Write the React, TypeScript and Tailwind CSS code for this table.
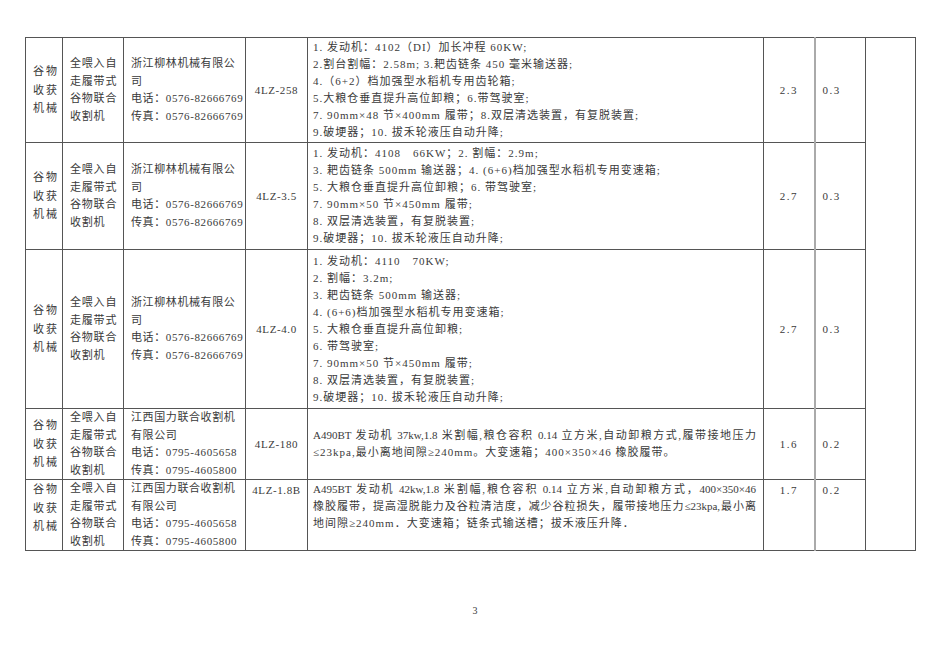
import React from "react";

type Row = {
  maker: string[];
  model: string;
  desc: string[];
  justify?: number;
  a: string;
  b: string;
  h: string;
  top?: boolean;
};

const kind = ["全喂入自", "走履带式", "谷物联合", "收割机"];
const liulin = ["浙江柳林机械有限公", "司", "电话：0576-82666769", "传真：0576-82666769"];
const guoli = ["江西国力联合收割机", "有限公司", "电话：0795-4605658", "传真：0795-4605800"];

const rows: Row[] = [
  {
    maker: liulin,
    model: "4LZ-258",
    desc: [
      "1. 发动机：4102（DI）加长冲程 60KW;",
      "2.割台割幅：2.58m; 3.耙齿链条 450 毫米输送器;",
      "4.（6+2）档加强型水稻机专用齿轮箱;",
      "5.大粮仓垂直提升高位卸粮；6.带驾驶室;",
      "7. 90mm×48 节×400mm 履带；8.双层清选装置，有复脱装置;",
      "9.破埂器；10. 拔禾轮液压自动升降;",
    ],
    a: "2.3",
    b: "0.3",
    h: "h-[105px]",
  },
  {
    maker: liulin,
    model: "4LZ-3.5",
    desc: [
      "1. 发动机：4108　66KW；2. 割幅：2.9m;",
      "3. 耙齿链条 500mm 输送器；4. (6+6)档加强型水稻机专用变速箱;",
      "5. 大粮仓垂直提升高位卸粮；6. 带驾驶室;",
      "7. 90mm×50 节×450mm 履带;",
      "8. 双层清选装置，有复脱装置;",
      "9.破埂器；10. 拔禾轮液压自动升降;",
    ],
    a: "2.7",
    b: "0.3",
    h: "h-[107px]",
  },
  {
    maker: liulin,
    model: "4LZ-4.0",
    desc: [
      "1. 发动机：4110　70KW;",
      "2. 割幅：3.2m;",
      "3. 耙齿链条 500mm 输送器;",
      "4. (6+6)档加强型水稻机专用变速箱;",
      "5. 大粮仓垂直提升高位卸粮;",
      "6. 带驾驶室;",
      "7. 90mm×50 节×450mm 履带;",
      "8. 双层清选装置，有复脱装置;",
      "9.破埂器；10. 拔禾轮液压自动升降;",
    ],
    a: "2.7",
    b: "0.3",
    h: "h-[159px]",
  },
  {
    maker: guoli,
    model: "4LZ-180",
    desc: [
      "A490BT 发动机 37kw,1.8 米割幅,粮仓容积 0.14 立方米,自动卸粮方式,履带接地压力",
      "≤23kpa,最小离地间隙≥240mm。大变速箱；400×350×46 橡胶履带。",
    ],
    justify: 1,
    a: "1.6",
    b: "0.2",
    h: "h-[71px]",
  },
  {
    maker: guoli,
    model: "4LZ-1.8B",
    desc: [
      "A495BT 发动机 42kw,1.8 米割幅,粮仓容积 0.14 立方米,自动卸粮方式，400×350×46",
      "橡胶履带，提高湿脱能力及谷粒清洁度，减少谷粒损失，履带接地压力≤23kpa,最小离",
      "地间隙≥240mm．大变速箱；链条式输送槽；拔禾液压升降．",
    ],
    justify: 2,
    a: "1.7",
    b: "0.2",
    h: "h-[71px]",
    top: true,
  },
];

export default function App() {
  return (
    <div
      lang="zh-CN"
      className="w-[950px] h-[672px] bg-white text-[#3a3a3a] overflow-hidden pt-[37px] font-['Liberation_Serif','Noto_Sans_CJK_SC',serif] text-[11px]"
    >
      <table className="table-fixed border-collapse ml-[25px] w-[890px]">
        <colgroup>
          <col className="w-[37px]" />
          <col className="w-[61px]" />
          <col className="w-[122px]" />
          <col className="w-[62px]" />
          <col className="w-[456px]" />
          <col className="w-[51px]" />
          <col className="w-[51px]" />
          <col className="w-[50px]" />
        </colgroup>
        <tbody>
          {rows.map((r, i) => {
            const v = r.top ? "align-top" : "align-middle";
            return (
              <tr key={i} className={r.h}>
                {/* category */}
                <td className={`border border-[#555] px-[7px] p-0 ${v}`}>
                  <div className="leading-[18.5px] tracking-[2px] whitespace-nowrap">
                    <div>谷物</div>
                    <div>收获</div>
                    <div>机械</div>
                  </div>
                </td>
                {/* kind */}
                <td className={`border border-[#555] px-[7px] p-0 ${v}`}>
                  <div className="leading-[17.5px] tracking-[0.8px] whitespace-nowrap">
                    {kind.map((t) => (
                      <div key={t}>{t}</div>
                    ))}
                  </div>
                </td>
                {/* maker */}
                <td className={`border border-[#555] pl-[7px] pr-[4px] p-0 ${v}`}>
                  <div className="leading-[17.5px] tracking-[0.6px] whitespace-nowrap">
                    {r.maker.map((t, k) => (
                      <div key={k}>{t}</div>
                    ))}
                  </div>
                </td>
                {/* model */}
                <td className={`border border-[#555] text-center tracking-[0.6px] whitespace-nowrap leading-[17px] ${r.top ? "align-top pt-[2px]" : "align-middle"}`}>
                  {r.model}
                </td>
                {/* description */}
                <td className={`border border-[#555] pl-[5px] pr-[7px] ${r.top ? "align-top pt-[1px]" : "align-middle"}`}>
                  <div className="leading-[17px] whitespace-nowrap">
                    {r.desc.map((t, k) =>
                      r.justify && k < r.justify ? (
                        <div key={k} className="text-justify [text-align-last:justify] whitespace-normal">
                          {t}
                        </div>
                      ) : (
                        <div key={k} className="tracking-[1px]">
                          {t}
                        </div>
                      )
                    )}
                  </div>
                </td>
                <td className={`border border-[#555] text-center tracking-[1.5px] leading-[17px] ${r.top ? "align-top pt-[2px]" : "align-middle"}`}>
                  {r.a}
                </td>
                <td className={`border border-[#555] border-l-2 border-l-[#aaa] pl-[7px] tracking-[1.5px] leading-[17px] ${r.top ? "align-top pt-[2px]" : "align-middle"}`}>
                  {r.b}
                </td>
                {i === 0 && <td rowSpan={5} className="border border-[#555]" />}
              </tr>
            );
          })}
        </tbody>
      </table>
      <div className="mt-[55px] text-center text-[10px] leading-none">3</div>
    </div>
  );
}
